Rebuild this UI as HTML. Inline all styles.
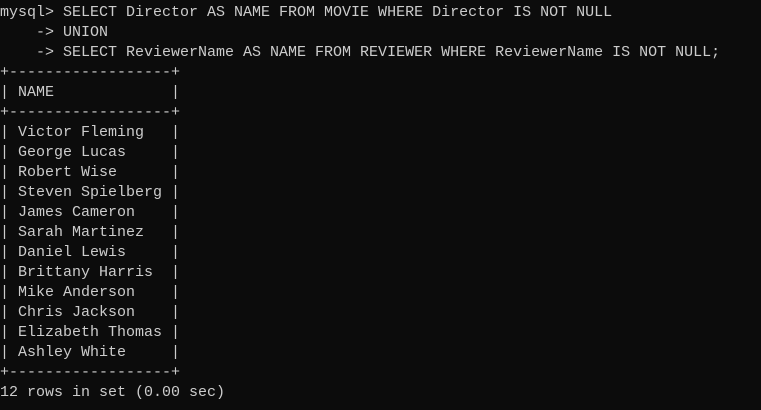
<!DOCTYPE html>
<html><head><meta charset="utf-8"><style>
html,body{margin:0;padding:0;background:#0c0c0c;width:761px;height:410px;overflow:hidden}
pre{margin:0;position:absolute;left:0;top:3px;color:#cccccc;font-family:"Liberation Mono",monospace;font-size:15px;line-height:20px}
</style></head><body><pre>mysql&gt; SELECT Director AS NAME FROM MOVIE WHERE Director IS NOT NULL
    -&gt; UNION
    -&gt; SELECT ReviewerName AS NAME FROM REVIEWER WHERE ReviewerName IS NOT NULL;
+------------------+
| NAME             |
+------------------+
| Victor Fleming   |
| George Lucas     |
| Robert Wise      |
| Steven Spielberg |
| James Cameron    |
| Sarah Martinez   |
| Daniel Lewis     |
| Brittany Harris  |
| Mike Anderson    |
| Chris Jackson    |
| Elizabeth Thomas |
| Ashley White     |
+------------------+
12 rows in set (0.00 sec)
</pre></body></html>
